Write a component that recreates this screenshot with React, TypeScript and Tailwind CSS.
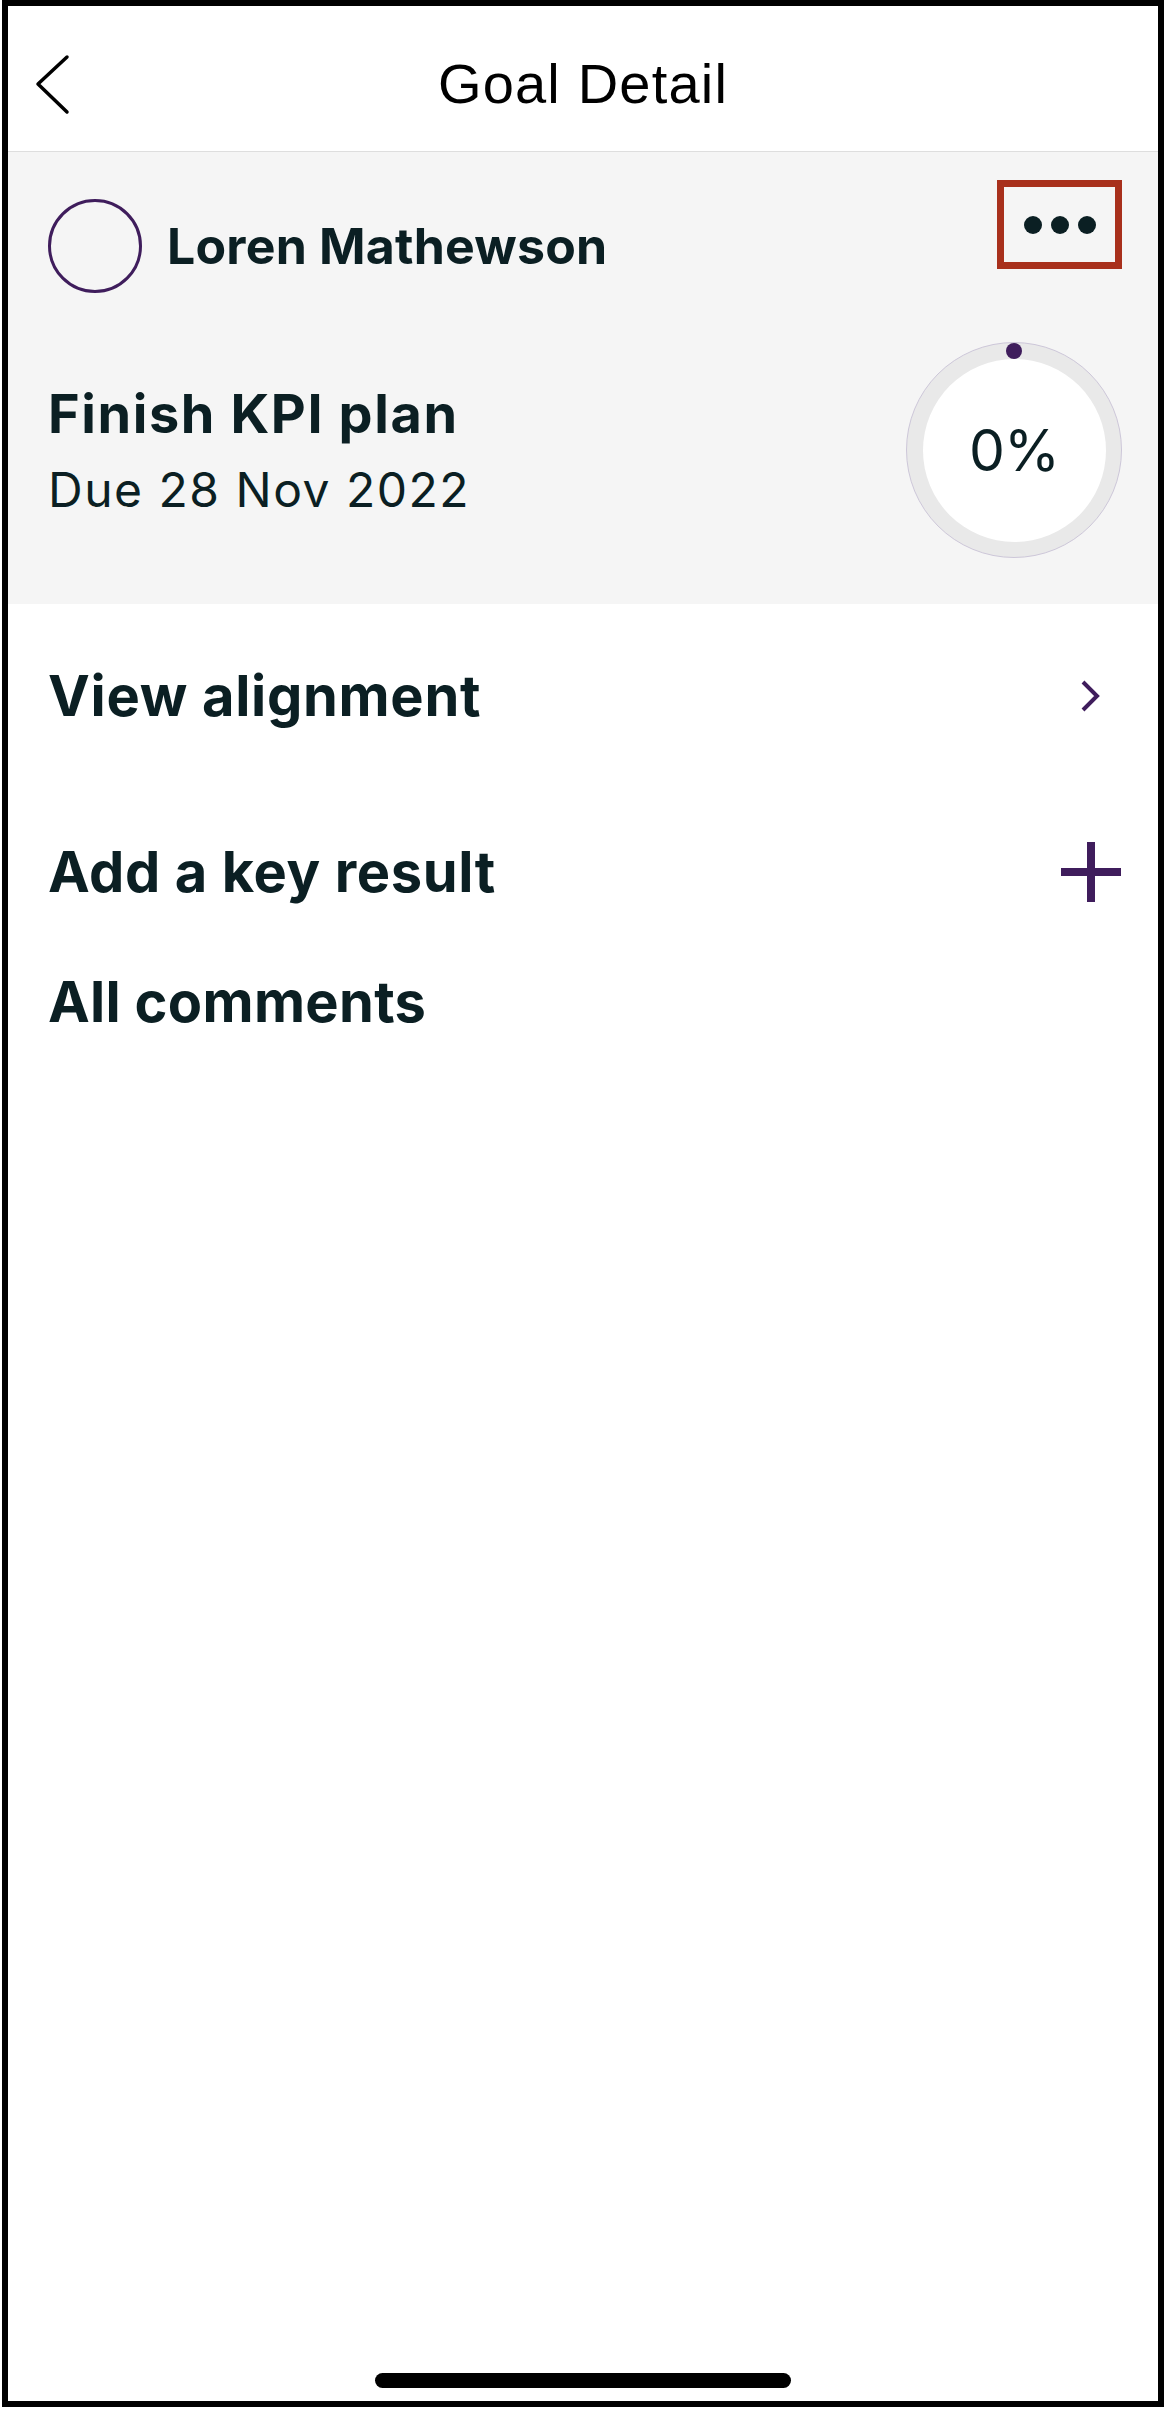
import React from 'react';

const ink = 'text-[#0b1f23]';

const GoalDetail = () => {
  return (
    <div className="w-[1166px] h-[2410px] bg-white font-['Inter',sans-serif]">
      <div className="ml-[2px] w-[1162px] h-[2407px] border-[6px] border-black flex flex-col">
        {/* Header */}
        <div className="h-[146px] pt-[11px] border-b border-[#dedede] grid grid-cols-[1fr_auto_1fr] items-center">
          <div className="pl-[24px]">
            <svg width="40" height="64" viewBox="0 0 40 64" fill="none">
              <path d="M35 5 L6 32 L35 60" stroke="#000" strokeWidth="3.5" strokeLinecap="round" strokeLinejoin="round" />
            </svg>
          </div>
          <h1 className="text-[56px] leading-none text-black font-['Liberation_Sans',sans-serif] tracking-[1.2px]">
            Goal Detail
          </h1>
          <div />
        </div>

        {/* Goal summary */}
        <section className="bg-[#f5f5f5] pl-[40px] pr-[36px] pt-[28px] pb-[46px]">
          <div className="flex items-start justify-between">
            <div className="mt-[19px] flex items-center gap-[25px]">
              <div className="w-[94px] h-[94px] rounded-full border-[3px] border-[#3f1d5c]" />
              <span className={`text-[50px] leading-none font-bold tracking-[0.2px] ${ink}`}>Loren Mathewson</span>
            </div>
            <button className="w-[125px] h-[89px] border-[7px] border-[#a8301c] flex items-center justify-center gap-[9px]">
              <span className="w-[18px] h-[18px] rounded-full bg-[#0b1f23]" />
              <span className="w-[18px] h-[18px] rounded-full bg-[#0b1f23]" />
              <span className="w-[18px] h-[18px] rounded-full bg-[#0b1f23]" />
            </button>
          </div>

          <div className="mt-[49px] flex items-center justify-between">
            <div className="flex flex-col gap-[25px]">
              <h2 className={`text-[54px] leading-none font-bold tracking-[1.6px] ${ink}`}>Finish KPI plan</h2>
              <p className={`text-[48px] leading-none tracking-[1.5px] ${ink}`}>Due 28 Nov 2022</p>
            </div>
            <div className="relative w-[216px] h-[216px] rounded-full bg-[#e9e9e9] border border-[#cdc7d9] flex items-center justify-center">
              <div className="w-[183px] h-[183px] rounded-full bg-white flex items-center justify-center">
                <span className={`text-[57px] leading-none tracking-[-1px] ${ink}`}>0%</span>
              </div>
              <span className="absolute top-[0px] left-1/2 -translate-x-1/2 w-[16px] h-[16px] rounded-full bg-[#3f1d5c]" />
            </div>
          </div>
        </section>

        {/* Actions */}
        <div className="pl-[40px] pr-[37px] pt-[46px]">
          <div className="h-[92px] flex items-center justify-between">
            <span className={`text-[56px] leading-none font-bold tracking-[0.7px] ${ink}`}>View alignment</span>
            <svg width="24" height="36" viewBox="0 0 24 36" fill="none" className="mr-[18px]">
              <path d="M4 4 L18 18 L4 32" stroke="#3f1d5c" strokeWidth="4" />
            </svg>
          </div>
          <div className="mt-[84px] h-[92px] flex items-center justify-between">
            <span className={`text-[56px] leading-none font-bold tracking-[0.6px] ${ink}`}>Add a key result</span>
            <svg width="60" height="60" viewBox="0 0 60 60">
              <rect x="26" y="0" width="8" height="60" fill="#3f1d5c" />
              <rect x="0" y="26" width="60" height="8" fill="#3f1d5c" />
            </svg>
          </div>
          <div className="mt-[38px] h-[92px] flex items-center">
            <span className={`text-[56px] leading-none font-bold tracking-[0.3px] ${ink}`}>All comments</span>
          </div>
        </div>

        <div className="flex-1" />
        {/* Home indicator */}
        <div className="mx-auto mb-[13px] w-[416px] h-[15px] rounded-full bg-black" />
      </div>
    </div>
  );
};

export default function App() {
  return <GoalDetail />;
}
